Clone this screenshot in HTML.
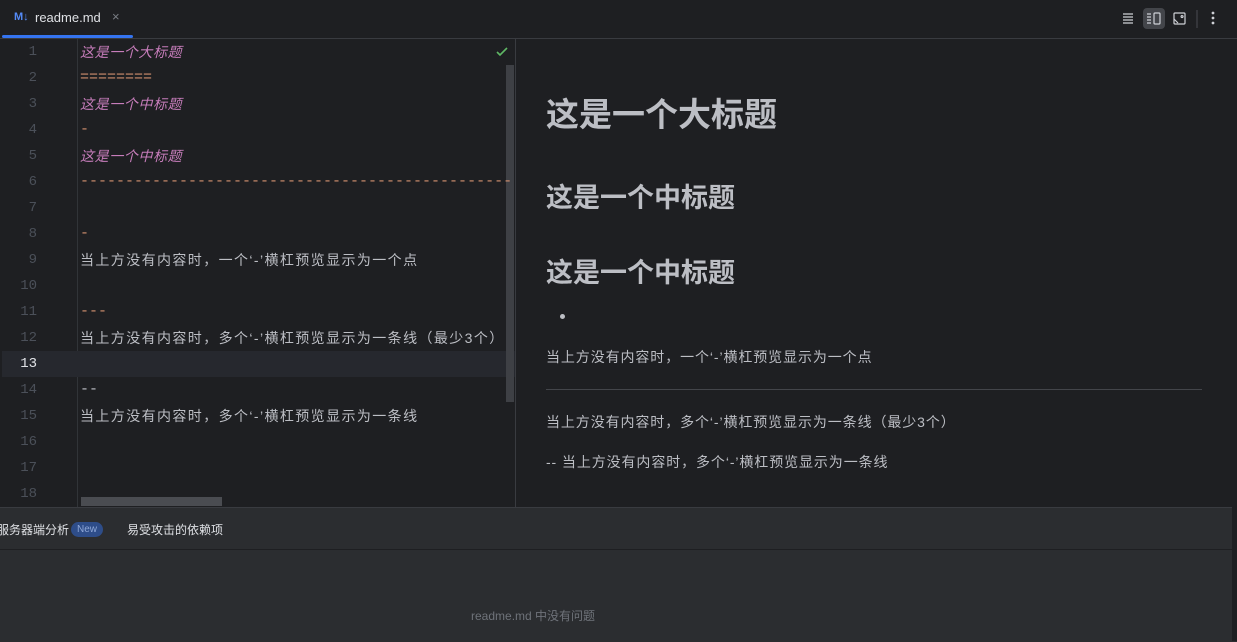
<!DOCTYPE html><html><head><meta charset="utf-8"><style>
body{margin:0;width:1237px;height:641px;background:#1e1f22;overflow:hidden;position:relative;font-family:"Liberation Sans","Noto Sans CJK SC",sans-serif;color:#bcbec4}
.abs{position:absolute}
.tabbar{left:0;top:0;width:1237px;height:38px;background:#1e1f22;border-bottom:1px solid #393b40}
.ln{position:absolute;left:0;width:37px;text-align:right;font:14px "Liberation Mono",monospace;color:#4b5059;line-height:26px}
.code{position:absolute;left:80px;font:15px "Liberation Mono","Noto Sans CJK SC",monospace;line-height:26px;white-space:pre;color:#bcbec4}
.h{color:#c77dbb;font-style:italic;font-family:"Liberation Sans","Noto Sans CJK SC",sans-serif;font-size:14px;letter-spacing:.6px}
.o{color:#cf8e6d}
.t{font-family:"Liberation Sans","Noto Sans CJK SC",sans-serif;font-size:14px;letter-spacing:1.4px}
.pv{position:absolute;left:546px;color:#bcbec4;white-space:nowrap}
.pt{font-size:14px;letter-spacing:.9px}
</style></head><body>
<div class="abs tabbar"></div>
<div class="abs" style="left:14px;top:11px;font:bold 11px 'Liberation Sans';color:#548af7">M↓</div>
<div class="abs" style="left:35px;top:10px;font-size:13px;color:#dfe1e5">readme.md</div>
<div class="abs" style="left:112px;top:9px;font-size:13px;color:#7a7e85">×</div>
<div class="abs" style="left:2px;top:35px;width:131px;height:3px;background:#3574f0;border-radius:2px"></div>
<svg class="abs" style="left:1118px;top:8px" width="110" height="22" viewBox="0 0 110 22" fill="none" stroke="#ced0d6" stroke-width="1.2">
<path d="M5 6h10M5 9h10M5 12h10M5 15h10"/>
<rect x="25" y="0" width="22" height="21" rx="4" fill="#43454a" stroke="none"/>
<path d="M29 6h4M29 9h4M29 12h4M29 15h4"/><rect x="36" y="5" width="6" height="11" rx="1"/>
<rect x="56" y="5" width="11" height="11" rx="1"/><path d="M56 11l4 4M64 7.5a1 1 0 1 0 .1 0"/>
<path d="M79 2v18" stroke="#43454a"/>
<circle cx="95" cy="5" r=".8" fill="#ced0d6"/><circle cx="95" cy="10" r=".8" fill="#ced0d6"/><circle cx="95" cy="15" r=".8" fill="#ced0d6"/>
</svg>
<div class="abs" style="left:0;top:39px;width:515px;height:468px;background:#1e1f22"></div>
<div class="abs" style="left:77px;top:39px;width:1px;height:468px;background:#313438"></div>
<div class="abs" style="left:515px;top:39px;width:1px;height:468px;background:#393b40"></div>
<div class="abs" style="left:2px;top:351px;width:513px;height:26px;background:#26282e"></div>
<div class="abs" style="left:506px;top:65px;width:8px;height:337px;background:#3e4045"></div>
<div class="abs" style="left:81px;top:497px;width:141px;height:9px;background:#4a4c51"></div>
<svg class="abs" style="left:495px;top:45px" width="14" height="14"><path d="M2 7l3 3 7-7" stroke="#5fb865" stroke-width="1.6" fill="none"/></svg>
<div class="abs" style="left:0;top:39px">
<div class="ln" style="top:0">1</div><div class="ln" style="top:26px">2</div><div class="ln" style="top:52px">3</div><div class="ln" style="top:78px">4</div><div class="ln" style="top:104px">5</div><div class="ln" style="top:130px">6</div><div class="ln" style="top:156px">7</div><div class="ln" style="top:182px">8</div><div class="ln" style="top:208px">9</div><div class="ln" style="top:234px">10</div><div class="ln" style="top:260px">11</div><div class="ln" style="top:286px">12</div><div class="ln" style="top:312px;color:#dfe1e5">13</div><div class="ln" style="top:338px">14</div><div class="ln" style="top:364px">15</div><div class="ln" style="top:390px">16</div><div class="ln" style="top:416px">17</div><div class="ln" style="top:442px">18</div>
<div class="code h" style="top:0">这是一个大标题</div>
<div class="code o" style="top:26px">========</div>
<div class="code h" style="top:52px">这是一个中标题</div>
<div class="code o" style="top:78px">-</div>
<div class="code h" style="top:104px">这是一个中标题</div>
<div class="code o" style="top:130px">------------------------------------------------</div>
<div class="code o" style="top:182px">-</div>
<div class="code t" style="top:208px">当上方没有内容时，一个‘-’横杠预览显示为一个点</div>
<div class="code o" style="top:260px">---</div>
<div class="code t" style="top:286px">当上方没有内容时，多个‘-’横杠预览显示为一条线（最少3个）</div>
<div class="code" style="top:338px">--</div>
<div class="code t" style="top:364px">当上方没有内容时，多个‘-’横杠预览显示为一条线</div>
</div>
<div class="pv" style="top:88px;font-size:33px;font-weight:bold">这是一个大标题</div>
<div class="pv" style="top:176px;font-size:27px;font-weight:bold">这是一个中标题</div>
<div class="pv" style="top:251px;font-size:27px;font-weight:bold">这是一个中标题</div>
<div class="abs" style="left:560px;top:314px;width:5px;height:5px;border-radius:50%;background:#bcbec4"></div>
<div class="pv pt" style="top:347px">当上方没有内容时，一个‘-’横杠预览显示为一个点</div>
<div class="abs" style="left:546px;top:389px;width:656px;height:1px;background:#43454a"></div>
<div class="pv pt" style="top:412px">当上方没有内容时，多个‘-’横杠预览显示为一条线（最少3个）</div>
<div class="pv pt" style="top:452px">-- 当上方没有内容时，多个‘-’横杠预览显示为一条线</div>
<div class="abs" style="left:0;top:507px;width:1237px;height:134px;background:#2b2d30;border-top:1px solid #393b40"></div>
<div class="abs" style="left:1232px;top:507px;width:5px;height:134px;background:#1e1f22"></div>
<div class="abs" style="left:0;top:549px;width:1232px;height:1px;background:#1e1f22"></div>
<div class="abs" style="left:-3px;top:521px;font-size:12px;color:#dfe1e5">服务器端分析</div>
<div class="abs" style="left:71px;top:522px;width:32px;height:15px;border-radius:8px;background:#2e4d89;color:#8fa8d8;font-size:10px;text-align:center;line-height:15px">New</div>
<div class="abs" style="left:127px;top:521px;font-size:12px;color:#dfe1e5">易受攻击的依赖项</div>
<div class="abs" style="left:471px;top:607px;font-size:12px;color:#6f737a">readme.md 中没有问题</div>
</body></html>
